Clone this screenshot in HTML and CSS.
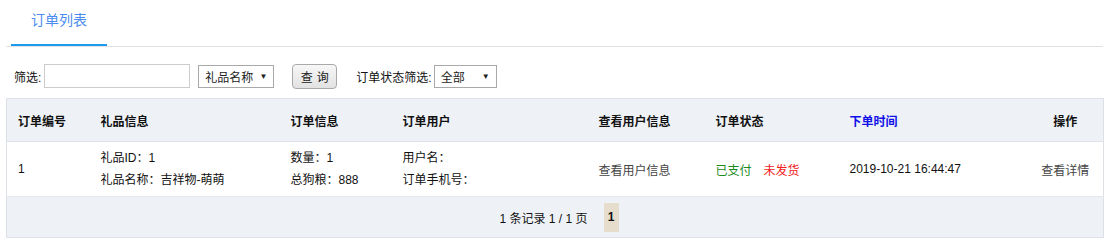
FILE: index.html
```html
<!DOCTYPE html>
<html lang="zh">
<head>
<meta charset="utf-8">
<title>订单列表</title>
<link rel="stylesheet" href="styles.css">
</head>
<body>
<div class="page">
  <div class="tabs">
    <div class="tab active">订单列表</div>
  </div>
  <div class="filters">
    <label class="lbl">筛选:</label>
    <input class="text-input" type="text">
    <div class="select sel-gift"><span>礼品名称</span><span class="arrow">▼</span></div>
    <button class="btn">查询</button>
    <label class="lbl lbl-status">订单状态筛选:</label>
    <div class="select sel-status"><span>全部</span><span class="arrow">▼</span></div>
  </div>
  <table class="grid">
    <colgroup>
      <col class="c1"><col class="c2"><col class="c3"><col class="c4"><col class="c5"><col class="c6"><col class="c7"><col class="c8">
    </colgroup>
    <thead>
      <tr>
        <th>订单编号</th>
        <th>礼品信息</th>
        <th>订单信息</th>
        <th>订单用户</th>
        <th>查看用户信息</th>
        <th>订单状态</th>
        <th class="sortable">下单时间</th>
        <th class="center">操作</th>
      </tr>
    </thead>
    <tbody>
      <tr>
        <td>1</td>
        <td><div class="line">礼品ID：1</div><div class="line">礼品名称：吉祥物-萌萌</div></td>
        <td><div class="line">数量：1</div><div class="line">总狗粮：888</div></td>
        <td><div class="line">用户名：</div><div class="line">订单手机号：</div></td>
        <td class="link">查看用户信息</td>
        <td><span class="paid">已支付</span><span class="unsent">未发货</span></td>
        <td>2019-10-21 16:44:47</td>
        <td class="center link">查看详情</td>
      </tr>
    </tbody>
    <tfoot>
      <tr>
        <td colspan="8">
          <div class="pager"><span class="info">1 条记录 1 / 1 页</span><span class="page-num">1</span></div>
        </td>
      </tr>
    </tfoot>
  </table>
</div>
</body>
</html>
```
FILE: styles.css
```css
* { box-sizing: border-box; }
body {
  margin: 0;
  font-family: "Liberation Sans", Arial, "Noto Sans CJK SC", sans-serif;
  font-size: 12px;
  color: #222;
  background: #fff;
}
.page { padding: 0 2px 0 6px; }
.tabs {
  border-bottom: 1px solid #e2e2e2;
  height: 47px;
  display: flex;
  padding-left: 5px;
}
.tab {
  width: 96px;
  height: 46px;
  padding-top: 10px;
  text-align: center;
  font-size: 14px;
  line-height: 20px;
  color: #4a8cf0;
  border-bottom: 2px solid #1a9bf0;
}
.filters {
  display: flex;
  align-items: center;
  height: 51px;
  padding-left: 8px;
  padding-top: 7px;
}
.lbl { color: #111; }
.text-input {
  margin-left: 3px;
  width: 146px;
  height: 24px;
  border: 1px solid #ccc;
  padding: 0 4px;
  font: inherit;
}
.select {
  height: 23px;
  border: 1px solid #a9a9a9;
  display: flex;
  align-items: center;
  justify-content: space-between;
  padding: 0 6px 0 6px;
  font-size: 12px;
  color: #222;
  background: #fff;
}
.select .arrow { font-size: 8px; color: #222; }
.sel-gift { width: 76px; margin-left: 8px; }
.sel-status { width: 63px; margin-left: 2px; }
.btn {
  margin-left: 18px;
  width: 45px;
  height: 25px;
  border: 1px solid #a9a9a9;
  border-radius: 4px;
  background: linear-gradient(#f7f7f7, #e2e2e2);
  font: inherit;
  font-size: 12px;
  letter-spacing: 4px;
  text-indent: 4px;
  color: #222;
  padding: 0;
}
.lbl-status { margin-left: 19px; }
.grid {
  width: 1097px;
  border-collapse: collapse;
  table-layout: fixed;
  border: 1px solid #dde1e5;
}
.c1 { width: 83px; }
.c2 { width: 190px; }
.c3 { width: 112px; }
.c4 { width: 196px; }
.c5 { width: 117px; }
.c6 { width: 134px; }
.c7 { width: 189px; }
.c8 { width: 76px; }
thead tr { background: #eef2f6; height: 43px; }
th {
  text-align: left;
  font-weight: bold;
  color: #111;
  padding: 0 0 0 11px;
  border-bottom: 1px solid #dde1e5;
}
th.sortable { color: #1010e8; }
th.center, td.center { text-align: center; padding-left: 0; }
tbody tr { height: 55px; background: #fff; }
td { padding: 0 0 0 11px; color: #111; }
.line { line-height: 22px; }
td.link { color: #444; }
.paid { color: #1a8a1a; }
.unsent { color: #f02020; margin-left: 12px; }
tfoot tr { background: #eef2f6; height: 41px; border-top: 1px solid #e4e8ec; }
tfoot td { padding: 0; }
.pager {
  display: flex;
  justify-content: center;
  align-items: center;
  height: 40px;
  padding-left: 8px;
}
.info { color: #111; }
.page-num {
  margin-left: 16px;
  width: 15px;
  height: 29px;
  line-height: 29px;
  text-align: center;
  background: #e6ddcc;
  font-weight: bold;
  color: #111;
}
```
